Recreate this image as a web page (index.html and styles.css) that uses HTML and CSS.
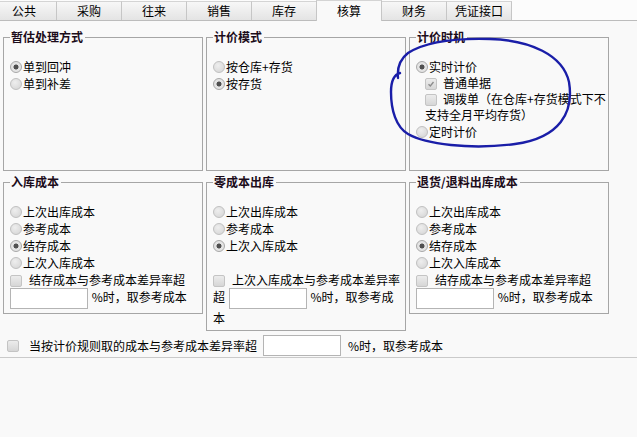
FILE: index.html
```html
<!DOCTYPE html>
<html>
<head>
    <title>核算</title>
    <link rel="stylesheet" href="styles.css">
</head>
<body>
    <div class="tabs">
        <div class="tab first">公共</div>
        <div class="tab">采购</div>
        <div class="tab">往来</div>
        <div class="tab">销售</div>
        <div class="tab">库存</div>
        <div class="tab active">核算</div>
        <div class="tab">财务</div>
        <div class="tab">凭证接口</div>
    </div>

    <div class="panel">
        <div class="grid">
            <fieldset class="box upper">
                <legend>暂估处理方式</legend>
                <div class="opt"><span class="radio on"></span>单到回冲</div>
                <div class="opt"><span class="radio"></span>单到补差</div>
            </fieldset>

            <fieldset class="box upper">
                <legend>计价模式</legend>
                <div class="opt"><span class="radio"></span>按仓库+存货</div>
                <div class="opt"><span class="radio on"></span>按存货</div>
            </fieldset>

            <fieldset class="box upper timing">
                <legend>计价时机</legend>
                <div class="opt"><span class="radio on"></span>实时计价</div>
                <div class="checks">
                    <div class="check-line"><span class="chk on"><svg viewBox="0 0 12 12"><path d="M3 6.2 L5.2 8.4 L9 3.6" /></svg></span>普通单据</div>
                    <div class="check-line"><span class="chk"></span>调拨单（在仓库+存货模式下不支持全月平均存货）</div>
                </div>
                <div class="opt"><span class="radio"></span>定时计价</div>
            </fieldset>

            <fieldset class="box">
                <legend>入库成本</legend>
                <div class="opt"><span class="radio"></span>上次出库成本</div>
                <div class="opt"><span class="radio"></span>参考成本</div>
                <div class="opt"><span class="radio on"></span>结存成本</div>
                <div class="opt"><span class="radio"></span>上次入库成本</div>
                <div class="para"><span class="chk"></span>结存成本与参考成本差异率超 <input class="field" type="text"> %时，取参考成本</div>
            </fieldset>

            <fieldset class="box">
                <legend>零成本出库</legend>
                <div class="opt"><span class="radio"></span>上次出库成本</div>
                <div class="opt"><span class="radio"></span>参考成本</div>
                <div class="opt"><span class="radio on"></span>上次入库成本</div>
                <div class="opt"></div>
                <div class="para"><span class="chk"></span>上次入库成本与参考成本差异率超 <input class="field" type="text"> %时，取参考成本</div>
            </fieldset>

            <fieldset class="box">
                <legend>退货/退料出库成本</legend>
                <div class="opt"><span class="radio"></span>上次出库成本</div>
                <div class="opt"><span class="radio"></span>参考成本</div>
                <div class="opt"><span class="radio on"></span>结存成本</div>
                <div class="opt"><span class="radio"></span>上次入库成本</div>
                <div class="para"><span class="chk"></span>结存成本与参考成本差异率超 <input class="field" type="text"> %时，取参考成本</div>
            </fieldset>
        </div>

        <div class="global">
            <span class="chk"></span>
            <span>当按计价规则取的成本与参考成本差异率超</span>
            <input class="field" type="text">
            <span>%时，取参考成本</span>
        </div>
    </div>

    <!-- hand-drawn marker around 计价时机 -->
    <svg class="scribble" width="637" height="437" viewBox="0 0 637 437">
        <path d="M398 78 C397 68, 399 60, 408 53 C425 42, 455 38, 490 39 C530 40, 563 55, 569 82 C574 112, 560 138, 515 144 C470 150, 425 144, 408 134 C396 127, 391 110, 391 92 C391 82, 393 75, 400 73" />
    </svg>
</body>
</html>
```

FILE: styles.css
```css
body {
    margin: 0;
    font-family: "Noto Sans CJK SC", "Liberation Sans", sans-serif;
    font-size: 12px;
    line-height: 17px;
    color: #000;
    background: #f9f9f9;
    position: relative;
}

.tabs {
    display: flex;
    height: 20px;
    border-bottom: 1px solid #bcbcbc;
    background: #fcfcfc;
}
.tab {
    width: 65px;
    height: 19px;
    margin-top: 1px;
    border-right: 1px solid #c6c6c6;
    border-top: 1px solid #d4d4d4;
    box-sizing: border-box;
    background: linear-gradient(#f7f7f7, #e4e4e4);
    text-align: center;
    line-height: 18px;
}
.tab.first { width: 57px; padding-right: 8px; }
.tab.active {
    height: 21px;
    margin-top: 0;
    margin-bottom: -1px;
    border-left: 1px solid #c6c6c6;
    margin-left: -1px;
    width: 66px;
    background: #f9f9f9;
    line-height: 20px;
}

.grid {
    display: grid;
    grid-template-columns: 200px 200px 200px;
    column-gap: 3px;
    row-gap: 4px;
    padding: 9px 0 0 3px;
    align-items: start;
}

.box {
    margin: 0;
    min-width: 0;
    padding: 14px 4px 4px 6px;
    border: 1px solid #a6a6a6;
    box-sizing: border-box;
}
.box.upper { height: 141px; }
.box.timing { padding-right: 0; }
.box legend {
    padding: 0 2px 0 1px;
    font-weight: bold;
    line-height: 14px;
    color: #1c0c1a;
}

.opt {
    display: flex;
    align-items: center;
    height: 17px;
}

.radio {
    flex: none;
    width: 12px;
    height: 12px;
    margin-right: 1px;
    border-radius: 50%;
    border: 1px solid #c0c0c0;
    box-sizing: border-box;
    background: radial-gradient(circle at 40% 35%, #eeeeee, #d3d3d3);
}
.radio.on {
    background: radial-gradient(circle, #505050 0 2.2px, #e4e4e4 2.8px);
    border-color: #a8a8a8;
}

.chk {
    display: inline-block;
    width: 12px;
    height: 12px;
    margin-right: 7px;
    vertical-align: -2px;
    border: 1px solid #c4c4c4;
    border-radius: 2px;
    box-sizing: border-box;
    background: linear-gradient(#ececec, #d6d6d6);
}
.chk svg {
    display: block;
    width: 10px;
    height: 10px;
}
.chk svg path {
    fill: none;
    stroke: #8c8c8c;
    stroke-width: 1.6;
}

.checks {
    margin-left: 9px;
    margin-right: -3px;
    line-height: 16px;
}
.check-line .chk { margin-right: 6px; }

.para { word-spacing: 1px; }
.para .chk { margin-right: 7px; }

.field {
    width: 78px;
    height: 21px;
    margin: 0;
    padding: 0;
    border: 1px solid #b4b4b4;
    box-sizing: border-box;
    background: #fff;
    vertical-align: middle;
    font: inherit;
}

.global {
    display: flex;
    align-items: center;
    padding: 4px 0 1px 7px;
    border-bottom: 1px solid #cacaca;
}
.global .chk { margin-right: 10px; }
.global .field { margin: 0 7px 0 6px; }

.scribble {
    position: absolute;
    left: 0;
    top: 0;
    pointer-events: none;
}
.scribble path {
    fill: none;
    stroke: #1a1ea8;
    stroke-width: 2.4;
    stroke-linecap: round;
}
```
